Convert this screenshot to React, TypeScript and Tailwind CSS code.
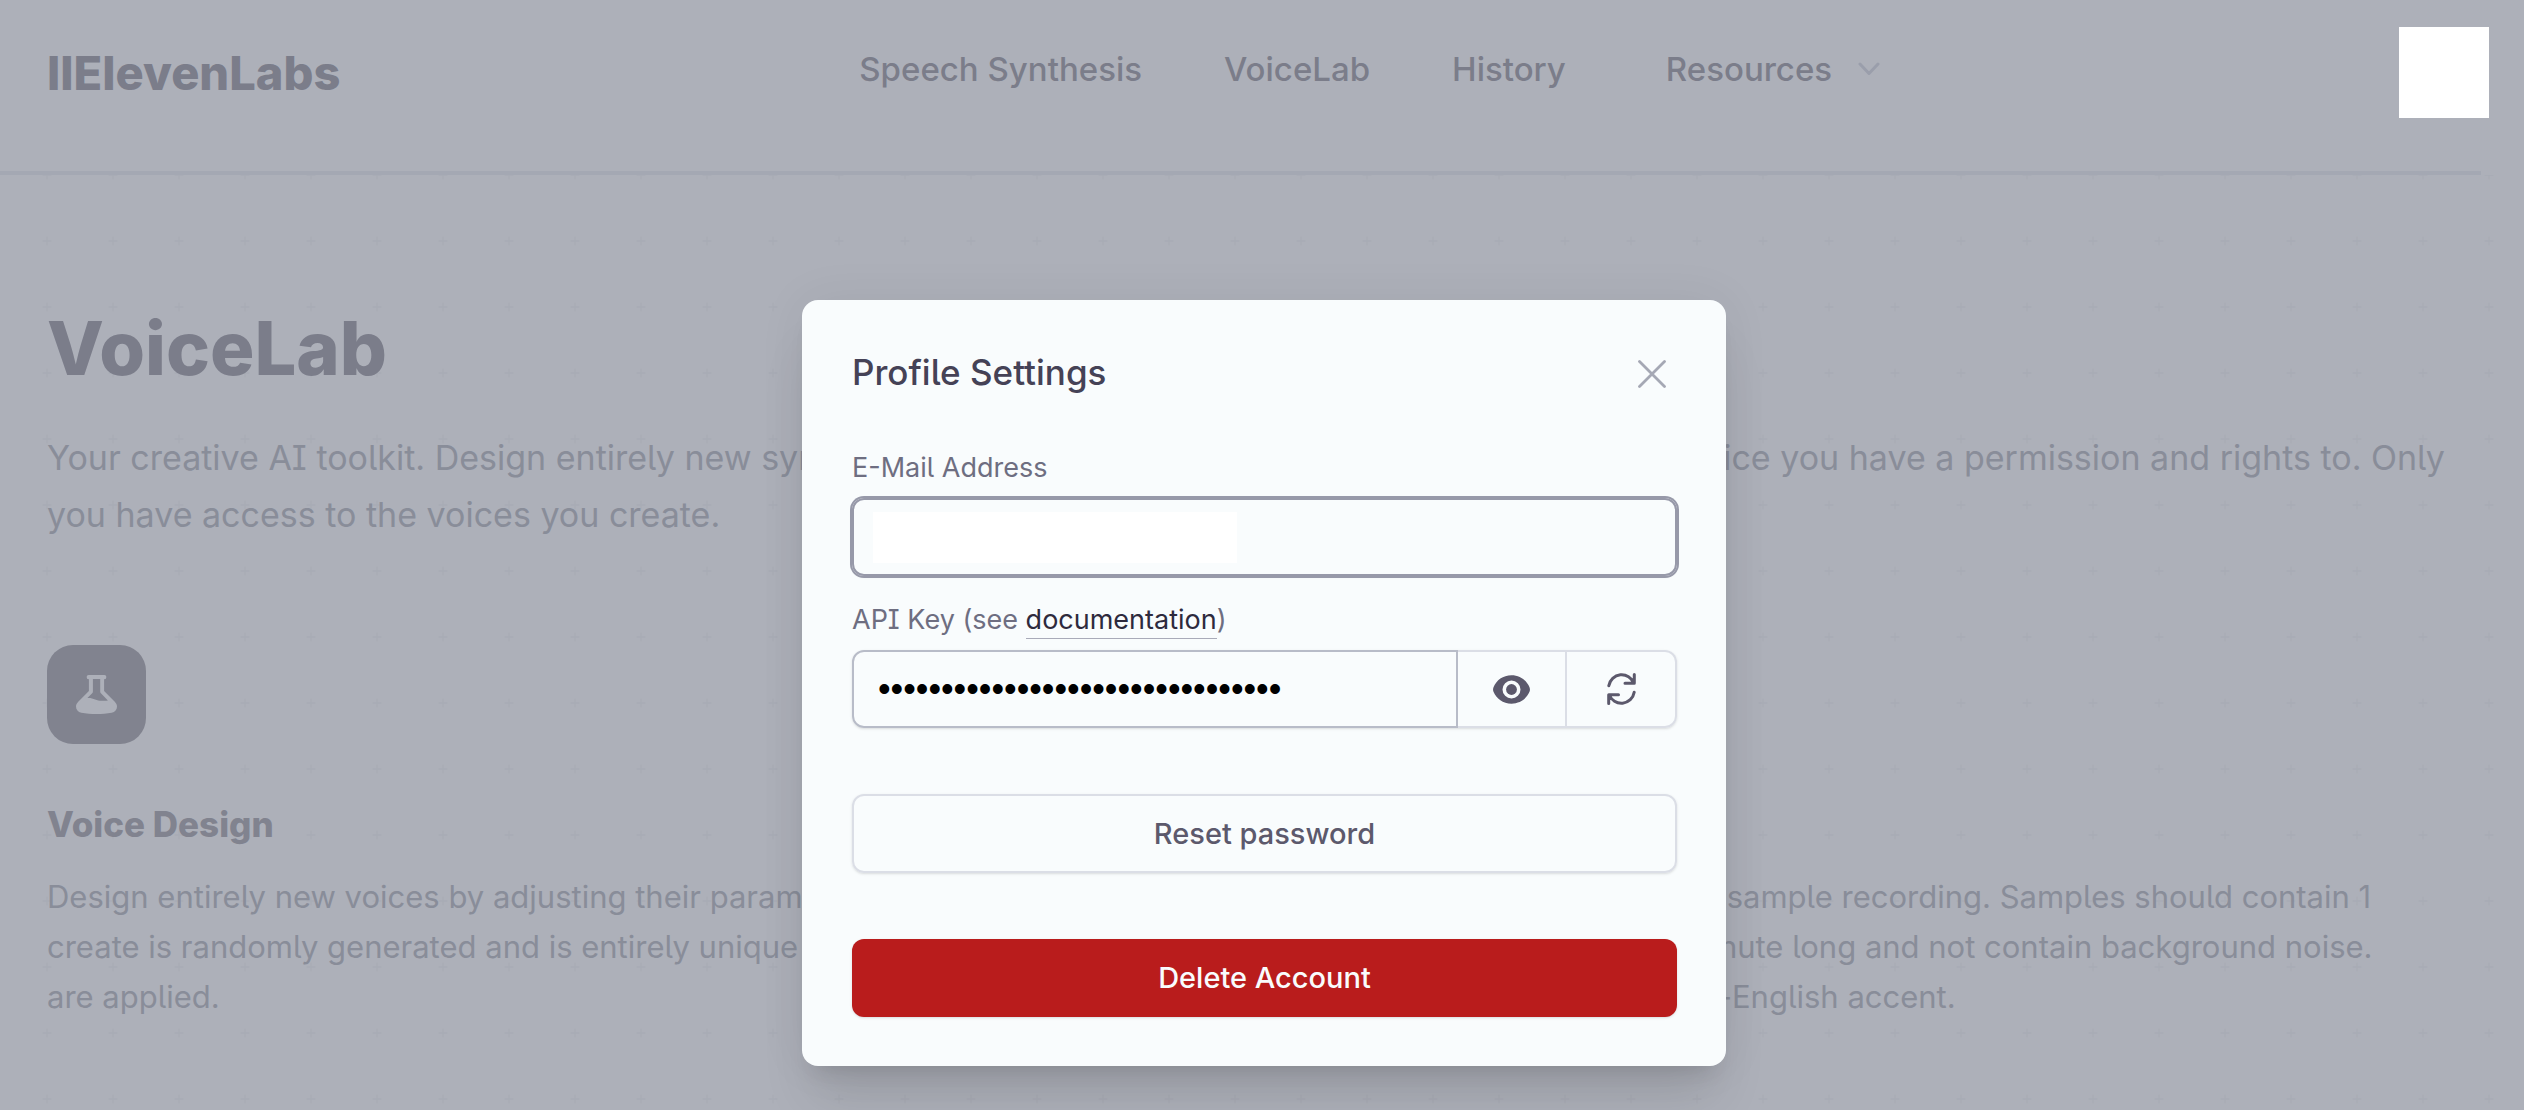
import type { ReactNode } from "react";

const bodyFont = "[font-feature-settings:'cv05','cv08']";

function PlusPattern() {
  return (
    <svg className="absolute inset-0 h-full w-full" aria-hidden="true">
      <defs>
        <pattern id="plus" x="14" y="-33" width="66" height="66" patternUnits="userSpaceOnUse">
          <path d="M33 28.5v9M28.5 33h9" stroke="#a8acb5" strokeWidth="1.4" />
        </pattern>
      </defs>
      <rect width="100%" height="100%" fill="url(#plus)" />
    </svg>
  );
}

function FlaskIcon() {
  return (
    <svg width="41" height="39" viewBox="0 0 41 39" fill="#adb0b9" aria-hidden="true">
      <path
        fillRule="evenodd"
        d="M12.6 0h15.8a1.9 1.9 0 0 1 1.9 2v.2a1.9 1.9 0 0 1-2.2 1.9V16l10.7 10.8c1.4 1.5 2.2 3 2.2 4.8 0 3.3-2 5.6-5.3 6.2-9.6 1.6-20.8 1.6-30.4 0C2 37.2 0 34.9 0 31.6c0-1.8.8-3.3 2.2-4.8L12.9 16V4.1a1.9 1.9 0 0 1-2.2-1.9V2a1.9 1.9 0 0 1 1.9-2zM16.9 4.1v12.4c0 .6-.2 1.2-.7 1.7L11.4 23c5.6-.5 9 2.8 14.3 2.8 2.4 0 4 0 6.2-.4l-7-7.2c-.5-.5-.7-1.1-.7-1.7V4.1z"
      />
    </svg>
  );
}

function EyeIcon() {
  return (
    <svg width="37" height="29" viewBox="0 0 37 29" fill="#5c596c" aria-hidden="true">
      <path
        fillRule="evenodd"
        d="M18.5.3C27 .3 33.6 5.3 36.5 12.2c.6 1.5.6 3.1 0 4.6C33.6 23.7 27 28.7 18.5 28.7S3.4 23.7.5 16.8c-.6-1.5-.6-3.1 0-4.6C3.4 5.3 10 .3 18.5.3zm0 5.2a9 9 0 1 0 0 18 9 9 0 0 0 0-18z"
      />
      <circle cx="18.5" cy="14.5" r="5.4" />
    </svg>
  );
}

function RefreshIcon() {
  return (
    <svg
      width="29"
      height="32"
      viewBox="0 0 29 32"
      fill="none"
      stroke="#5c596c"
      strokeWidth="3"
      strokeLinecap="round"
      strokeLinejoin="round"
      aria-hidden="true"
    >
      <path d="M27.3 1.5V10.2H18M1.8 12.7A13 13 0 0 1 26.8 10.2" />
      <path d="M1.7 30.5V21.8H11.5M27.2 19.3A13 13 0 0 1 2.2 21.8" />
    </svg>
  );
}

function NavLink({ children }: { children: ReactNode }) {
  return (
    <a href="#" className="whitespace-nowrap">
      {children}
    </a>
  );
}

function Feature({ title, lines }: { title: string; lines: string[] }) {
  return (
    <section>
      <div className="flex size-[99px] items-center justify-center rounded-[26px] bg-[#81838f]">
        <FlaskIcon />
      </div>
      <h2 className="mt-14 text-[35px] leading-[48px] font-extrabold text-[#81838f]">{title}</h2>
      <p className="mt-6 text-[31px] leading-[50px] text-[#898d99]">
        {lines.map((line) => (
          <span key={line} className="block whitespace-nowrap">
            {line}
          </span>
        ))}
      </p>
    </section>
  );
}

function ProfileDialog() {
  return (
    <div
      role="dialog"
      aria-labelledby="dialog-title"
      className={`w-[924px] rounded-[16px] bg-[#f9fcfd] pt-[52px] pr-[49px] pb-[49px] pl-[50px] shadow-[0_42px_52px_-10px_rgba(0,0,0,0.1),0_16px_20px_-12px_rgba(0,0,0,0.1),0_0_50px_rgba(0,0,0,0.06)] ${bodyFont}`}
    >
      <div className="flex items-center justify-between">
        <h2 id="dialog-title" className="text-[35px] leading-10 font-medium text-[#454256]">
          Profile Settings
        </h2>
        <button type="button" aria-label="Close" className="mr-[11px] pt-1">
          <svg width="28" height="28" viewBox="0 0 28 28" fill="none" stroke="#a5a8b4" strokeWidth="2.8" strokeLinecap="round" aria-hidden="true">
            <path d="M1.5 1.5l25 25M26.5 1.5l-25 25" />
          </svg>
        </button>
      </div>

      <label htmlFor="email" className="mt-[58px] block text-[27px] leading-9 text-[#6e6e81]">
        E-Mail Address
      </label>
      <div className="mt-3 flex h-[78px] items-center rounded-[12px] border-2 border-[#9799a9] px-[19px] shadow-sm ring-2 ring-[#9799a9]">
        <input
          id="email"
          type="email"
          className="h-[51px] w-[364px] bg-white text-[28px] outline-none"
        />
      </div>

      <label htmlFor="api-key" className="mt-[26px] block text-[27px] leading-9 text-[#6e6e81]">
        API Key (see{" "}
        <a href="#" className="border-b border-[#a9abb9] pb-0.5 text-[#2e2a3d]">
          documentation
        </a>
        )
      </label>
      <div className="mt-3 flex h-[78px] rounded-[12px] shadow-sm">
        <input
          id="api-key"
          type="password"
          readOnly
          value="0123456789abcdef0123456789abcdef"
          className="min-w-0 flex-1 rounded-l-[12px] border-2 border-[#b8bcc8] pl-6 font-['Liberation_Sans',sans-serif] text-[36px] text-black outline-none"
        />
        <button
          type="button"
          aria-label="Show API key"
          className="flex w-[109px] items-center justify-center border-y-2 border-r-2 border-[#dbdee6]"
        >
          <EyeIcon />
        </button>
        <button
          type="button"
          aria-label="Regenerate API key"
          className="flex w-[110px] items-center justify-center rounded-r-[12px] border-y-2 border-r-2 border-[#dbdee6]"
        >
          <RefreshIcon />
        </button>
      </div>

      <button
        type="button"
        className="mt-[66px] block h-[79px] w-full rounded-[12px] border-2 border-[#dbdee6] text-[29px] font-medium text-[#5c596c] shadow-sm [font-feature-settings:normal]"
      >
        Reset password
      </button>
      <button
        type="button"
        className="mt-[66px] block h-[78px] w-full rounded-[12px] bg-[#b91c1c] text-[29px] font-medium text-[#f9fcfd] shadow-sm [font-feature-settings:normal]"
      >
        Delete Account
      </button>
    </div>
  );
}

export default function App() {
  return (
    <div className="relative flex min-h-screen flex-col overflow-hidden bg-[#adb0b9] font-['Inter',sans-serif]">
      <header className="flex items-center justify-between pt-[27px] pr-[35px] pb-[53px] pl-[47px] text-[#7b7d8a]">
        <a href="#" className="text-[47px] leading-[60px] font-extrabold">
          llElevenLabs
        </a>
        <nav className="mb-2 flex items-center gap-[82px] text-[33px] leading-10 font-medium">
          <NavLink>Speech Synthesis</NavLink>
          <NavLink>VoiceLab</NavLink>
          <NavLink>History</NavLink>
          <button type="button" className="ml-[18px] flex items-center gap-[26px]">
            Resources
            <svg width="22" height="14" viewBox="0 0 22 14" fill="none" stroke="#9a9eab" strokeWidth="3" strokeLinecap="round" strokeLinejoin="round" aria-hidden="true">
              <path d="M2 2l9 9.5L20 2" />
            </svg>
          </button>
        </nav>
        <button type="button" aria-label="Account" className="h-[91px] w-[90px] bg-white" />
      </header>
      <div className="mr-[43px] h-1 bg-[#a4a8b3]" />

      <main className={`relative flex-1 pt-[133px] pl-[47px] ${bodyFont}`}>
        <PlusPattern />
        <div className="relative">
          <h1 className="text-[74px] leading-[80px] font-extrabold text-[#7b7d8a]">VoiceLab</h1>
          <p className="mt-[41px] text-[34px] leading-[57px] text-[#898d99]">
            <span className="block whitespace-nowrap">
              Your creative AI toolkit. Design entirely new synthetic voices from scratch. Clone your own voice or a voice
              you have a permission and rights to. Only
            </span>
            <span className="block">you have access to the voices you create.</span>
          </p>
          <div className="mt-[102px] grid grid-cols-2 pr-[140px]">
            <Feature
              title="Voice Design"
              lines={[
                "Design entirely new voices by adjusting their parameters. Every voice you",
                "create is randomly generated and is entirely unique even if same settings",
                "are applied.",
              ]}
            />
            <Feature
              title="Voice Cloning"
              lines={[
                "Clone your own voice with a clean sample recording. Samples should contain 1",
                "or more speakers and be over 1 minute long and not contain background noise.",
                "Might not work for voices of a non-English accent.",
              ]}
            />
          </div>
        </div>
      </main>

      <div className="absolute inset-0 flex items-start justify-center pt-[300px] pl-1">
        <ProfileDialog />
      </div>
    </div>
  );
}
